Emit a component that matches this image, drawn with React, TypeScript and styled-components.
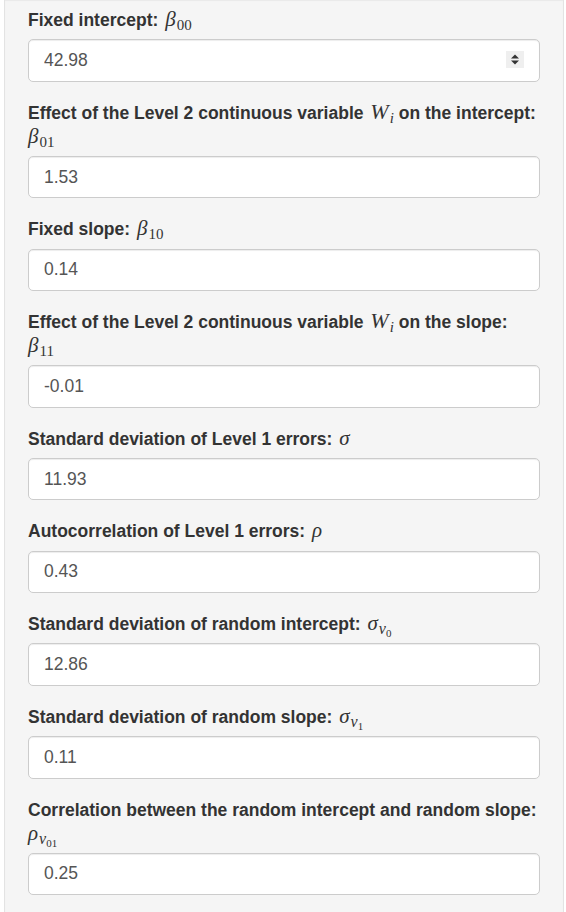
import React from "react";
import styled, { createGlobalStyle } from "styled-components";

const Global = createGlobalStyle`
  html, body { margin: 0; padding: 0; background: #ffffff; }
  body { font-family: "Liberation Sans", Arial, sans-serif; color: #333; }
  * { box-sizing: border-box; }
`;

const Page = styled.div`
  padding: 0 2px 0 4px;
`;

const Well = styled.div`
  background: #f5f5f5;
  border: 1px solid #e3e3e3;
  border-top: none;
  border-bottom: none;
  box-shadow: inset 0 1px 1px rgba(0, 0, 0, 0.05);
  padding: 8px 23px 0;
  min-height: 912px;
`;

const Group = styled.div`
  margin-bottom: 19px;
`;

const Label = styled.label`
  display: block;
  font-weight: 700;
  font-size: 17.5px;
  line-height: 24px;
  margin-bottom: 7.2px;
  color: #333;
`;

const Phrase = styled.span`
  white-space: nowrap;
`;

const MathRun = styled.span<{ $block?: boolean }>`
  display: ${(p) => (p.$block ? "block" : "inline")};
  font-family: "Liberation Serif", "Times New Roman", serif;
  font-weight: 400;
  white-space: nowrap;
  margin-left: ${(p) => (p.$block ? 0 : 2)}px;
`;

const Ital = styled.span<{ $size?: number }>`
  font-style: italic;
  font-size: ${(p) => p.$size ?? 21}px;
  line-height: 0;
  padding-right: 1px;
`;

const Sub = styled.span<{ $size?: number; $drop?: number; $italic?: boolean }>`
  font-style: ${(p) => (p.$italic ? "italic" : "normal")};
  font-size: ${(p) => p.$size ?? 15}px;
  vertical-align: ${(p) => -(p.$drop ?? 4)}px;
  line-height: 0;
`;

const InputWrap = styled.div`
  position: relative;
`;

const Field = styled.input`
  display: block;
  width: 100%;
  height: 42.5px;
  padding: 7px 15px;
  font-family: "Liberation Sans", Arial, sans-serif;
  font-size: 17.5px;
  color: #555;
  background: #fff;
  border: 1px solid #ccc;
  border-radius: 5px;
  box-shadow: inset 0 1px 1px rgba(0, 0, 0, 0.075);
  outline: none;
`;

const Spinner = styled.div`
  position: absolute;
  right: 16px;
  top: 12px;
  width: 18px;
  height: 17px;
  background: #efefef;
  display: flex;
  align-items: center;
  justify-content: center;
`;

const Beta = ({ sub, block }: { sub: string; block?: boolean }) => (
  <MathRun $block={block}>
    <Ital>β</Ital>
    <Sub>{sub}</Sub>
  </MathRun>
);

const WI = () => (
  <MathRun>
    <Ital $size={22}>W</Ital>
    <Sub $italic $size={15}>i</Sub>
  </MathRun>
);

const Nested = ({ base, sub, block }: { base: string; sub: string; block?: boolean }) => (
  <MathRun $block={block}>
    <Ital>{base}</Ital>
    <Sub $italic $size={16} $drop={4}>
      ν
      <Sub $size={11} $drop={3}>{sub}</Sub>
    </Sub>
  </MathRun>
);

type Item = { label: React.ReactNode; value: string; spinner?: boolean };

const items: Item[] = [
  {
    label: (
      <>
        <Phrase>Fixed intercept:</Phrase> <Beta sub="00" />
      </>
    ),
    value: "42.98",
    spinner: true,
  },
  {
    label: (
      <>
        <Phrase>
          Effect of the Level 2 continuous variable <WI /> on the intercept:
        </Phrase>
        <Beta sub="01" block />
      </>
    ),
    value: "1.53",
  },
  {
    label: (
      <>
        <Phrase>Fixed slope:</Phrase> <Beta sub="10" />
      </>
    ),
    value: "0.14",
  },
  {
    label: (
      <>
        <Phrase>
          Effect of the Level 2 continuous variable <WI /> on the slope:
        </Phrase>
        <Beta sub="11" block />
      </>
    ),
    value: "-0.01",
  },
  {
    label: (
      <>
        <Phrase>Standard deviation of Level 1 errors:</Phrase>{" "}
        <MathRun>
          <Ital>σ</Ital>
        </MathRun>
      </>
    ),
    value: "11.93",
  },
  {
    label: (
      <>
        <Phrase>Autocorrelation of Level 1 errors:</Phrase>{" "}
        <MathRun>
          <Ital>ρ</Ital>
        </MathRun>
      </>
    ),
    value: "0.43",
  },
  {
    label: (
      <>
        <Phrase>Standard deviation of random intercept:</Phrase>{" "}
        <Nested base="σ" sub="0" />
      </>
    ),
    value: "12.86",
  },
  {
    label: (
      <>
        <Phrase>Standard deviation of random slope:</Phrase>{" "}
        <Nested base="σ" sub="1" />
      </>
    ),
    value: "0.11",
  },
  {
    label: (
      <>
        <Phrase>Correlation between the random intercept and random slope:</Phrase>
        <Nested base="ρ" sub="01" block />
      </>
    ),
    value: "0.25",
  },
];

export default function App() {
  return (
    <Page>
      <Global />
      <Well>
        {items.map((it, i) => (
          <Group key={i}>
            <Label>{it.label}</Label>
            <InputWrap>
              <Field type="text" defaultValue={it.value} readOnly />
              {it.spinner && (
                <Spinner>
                  <svg width="10" height="13" viewBox="0 0 10 13">
                    <path d="M1 5.5 L5 1.5 L9 5.5 Z" fill="#333" />
                    <path d="M1 7.5 L9 7.5 L5 11.5 Z" fill="#333" />
                  </svg>
                </Spinner>
              )}
            </InputWrap>
          </Group>
        ))}
      </Well>
    </Page>
  );
}
